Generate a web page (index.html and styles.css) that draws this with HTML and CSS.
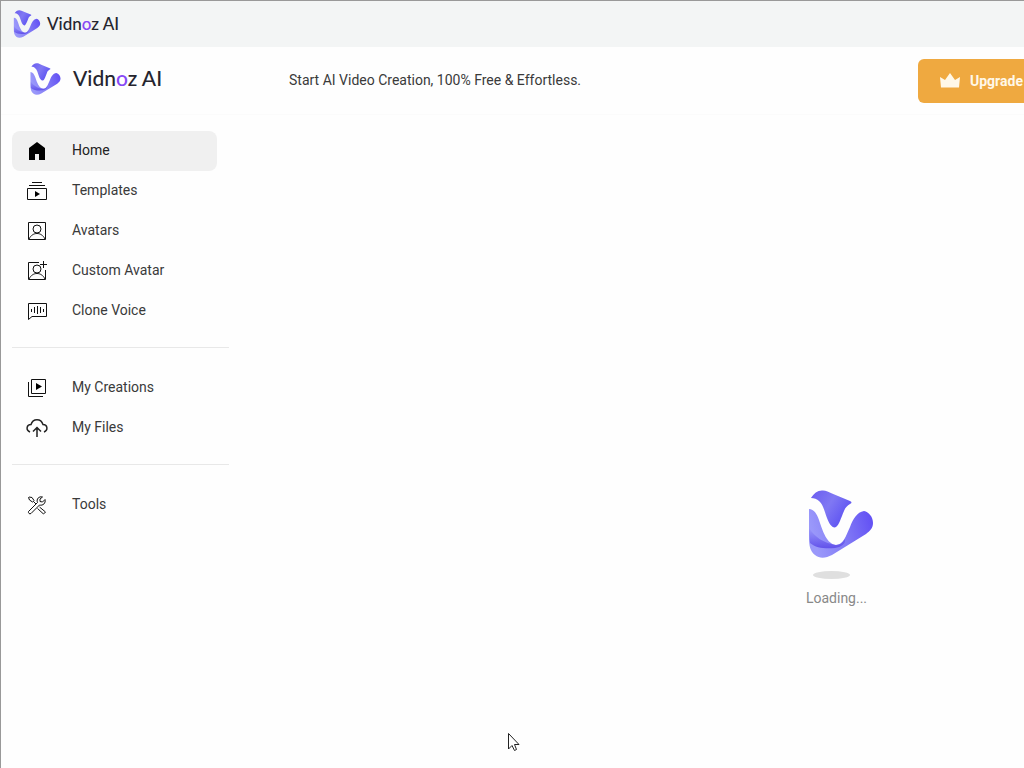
FILE: index.html
```html
<!DOCTYPE html>
<html lang="en">
<head>
    <meta charset="UTF-8">
    <meta name="viewport" content="width=device-width, initial-scale=1.0">
    <title>Vidnoz AI</title>
    <link rel="stylesheet" href="styles.css">
</head>
<body>
    <svg class="defs" aria-hidden="true">
        <defs>
            <linearGradient id="top" x1="0" y1="0" x2="1" y2="0.6">
                <stop offset="0" stop-color="#6a5df0"/>
                <stop offset="0.5" stop-color="#8078f3"/>
                <stop offset="1" stop-color="#5b50f2"/>
            </linearGradient>
            <linearGradient id="bottom" x1="0" y1="0.2" x2="1" y2="0">
                <stop offset="0" stop-color="#9a98fa"/>
                <stop offset="0.5" stop-color="#8078f5"/>
                <stop offset="1" stop-color="#5f4cf4"/>
            </linearGradient>
            <linearGradient id="fold" x1="0" y1="0" x2="0" y2="1">
                <stop offset="0" stop-color="#6658ee" stop-opacity="0"/>
                <stop offset="1" stop-color="#6252ea"/>
            </linearGradient>
        </defs>
        <symbol id="mark" viewBox="0 0 66 68">
            <path fill="url(#top)" d="M3 8C6 3 10 0 15 0.500C18 0.500 21 2 24 3.500L42 11C44 12 44 13 42 14C39 16 37 18 36 21C33 28 31 35 28 37C25 39 21 34 19 28C16 20 15 14 11 11C9 9 6 8 3 8Z"/>
            <path fill="url(#bottom)" d="M1 19C6 19 9 24 11 30C15 42 19 54 28 55C35 55 38 46 42 37C45 29 49 22 56 21C61 22 65 27 65 33C65 38 62 41 58 44L24 65C18 68 12 69 7 65C2 61 1 55 1 48Z"/>
            <path fill="url(#fold)" d="M1 38C7 47 15 53 28 55C32 55 35 52 37 49C38 54 33 57 27 58C17 59 8 58 2 53Z"/>
        </symbol>
    </svg>

    <div class="window">
        <div class="titlebar">
            <svg class="mark"><use href="#mark"/></svg>
            <span class="brand">Vidn<span class="brand-o">o</span>z AI</span>
        </div>

        <header class="header">
            <a class="logo" href="#">
                <svg class="mark"><use href="#mark"/></svg>
                <span class="brand">Vidn<span class="brand-o">o</span>z AI</span>
            </a>
            <p class="tagline">Start AI Video Creation, 100% Free &amp; Effortless.</p>
            <button class="upgrade" type="button">
                <svg width="20" height="16" viewBox="0 0 20 16" fill="#fff8e8"><path d="M1 14.500L0 4L5 7L10 0L15 7L20 4L19 14.500Z"/></svg>
                Upgrade
            </button>
        </header>

        <div class="layout">
            <nav class="sidebar">
                <ul class="menu">
                    <li><a class="item active" href="#">
                        <svg viewBox="0 0 24 24"><path fill="#000" stroke="none" d="M12 3L20 9V21H14V15H10V21H4V9Z"/></svg>
                        <span>Home</span></a></li>
                    <li><a class="item" href="#">
                        <svg viewBox="0 0 24 24"><path d="M7 3.500H17M4 6.500H20M2.500 9.500H21.500V20.500H2.500Z"/><path fill="#000" stroke="none" d="M10 12V18L15 15Z"/></svg>
                        <span>Templates</span></a></li>
                    <li><a class="item" href="#">
                        <svg viewBox="0 0 24 24"><path d="M3.500 3.500H20.500V20.500H3.500Z"/><circle cx="12" cy="10" r="4"/><path d="M4 20C6 16 9 14.500 12 14.500S18 16 20 20"/></svg>
                        <span>Avatars</span></a></li>
                    <li><a class="item" href="#">
                        <svg viewBox="0 0 24 24"><path d="M14 3.500H3.500V20.500H20.500V11M18.500 2V9M15 5.500H22"/><circle cx="12" cy="10" r="4"/><path d="M4 20C6 16 9 14.500 12 14.500S18 16 20 20"/></svg>
                        <span>Custom Avatar</span></a></li>
                    <li><a class="item" href="#">
                        <svg viewBox="0 0 24 24"><path d="M3.500 4.500H21.500V17.500H7L3.500 20.500Z"/><path d="M6.500 10V13M9.500 8V14M12.500 7V15M15.500 8V14M18.500 10V13"/></svg>
                        <span>Clone Voice</span></a></li>
                </ul>
                <ul class="menu">
                    <li><a class="item" href="#">
                        <svg viewBox="0 0 24 24"><path d="M6.500 3.500H20.500V17.500H6.500ZM3.500 6V20.500H18"/><path fill="#000" stroke="none" d="M11 7V14L17 10.500Z"/></svg>
                        <span>My Creations</span></a></li>
                    <li><a class="item" href="#">
                        <svg class="bold" viewBox="0 0 24 24"><path d="M5 16C0.500 14 1.500 8.500 6 8.500C8 2 16 2 18 8.500C22.500 8.500 23.500 14 19 16M12 21V12M8 15.500L12 11.500L16 15.500"/></svg>
                        <span>My Files</span></a></li>
                </ul>
                <ul class="menu">
                    <li><a class="item" href="#">
                        <svg viewBox="0 0 24 24"><path d="M4 4L7 4.500L9 7.500L8.500 8.500L7.500 9L4.500 7L3.500 4.500ZM8.500 8.500L11 11M14.500 14L20.500 19L18.500 21L12.500 15.500"/><path d="M17.500 4C14 3 11 6 12.500 9.500L3.500 18.500C3 20 4.500 21.500 6 20.500L14.500 12C18 13 21 10 20 6.500L17.500 9L15 8.500V6Z"/></svg>
                        <span>Tools</span></a></li>
                </ul>
            </nav>

            <main class="content">
                <div class="loader" role="status">
                    <svg class="mark"><use href="#mark"/></svg>
                    <div class="shadow"></div>
                    <p>Loading...</p>
                </div>
            </main>
        </div>
    </div>

    <svg class="cursor" width="14" height="20" viewBox="0 0 14 20" aria-hidden="true">
        <path fill="#fff" stroke="#222" d="M1.500 1.500V17L5 13.500L7.500 18.500L9.500 17.500L7.500 12.500H12Z"/>
    </svg>
</body>
</html>
```
FILE: styles.css
```css
* {
    box-sizing: border-box;
}
body {
    margin: 0;
    min-height: 100vh;
    overflow: hidden;
    font-family: Roboto, "Liberation Sans", sans-serif;
    font-size: 14px;
    color: #3a3a3a;
    background-color: #fefefe;
}
p, ul {
    margin: 0;
    padding: 0;
}
.defs {
    position: absolute;
    width: 0;
    height: 0;
}
.window {
    display: flex;
    flex-direction: column;
    min-width: 1444px;
    min-height: 100vh;
    border-top: 1px solid #999;
    border-left: 1px solid #999;
}

/* brand */
.brand {
    padding-bottom: 2px;
    font-family: Lato, sans-serif;
    font-weight: 500;
    color: #25252f;
}
.brand-o {
    color: #8748f5;
}

/* top bars */
.titlebar {
    display: flex;
    align-items: center;
    gap: 6px;
    height: 46px;
    padding-left: 12px;
    background-color: #f3f5f5;
}
.titlebar .mark {
    width: 28px;
    height: 28px;
}
.titlebar .brand {
    font-size: 17px;
}
.header {
    display: grid;
    grid-template-columns: 288px 629px auto;
    align-items: center;
    justify-content: start;
    height: 68px;
    border-bottom: 1px solid #fbfbfb;
}
.logo {
    display: flex;
    align-items: center;
    gap: 12px;
    padding: 0 0 4px 29px;
    text-decoration: none;
}
.logo .mark {
    width: 31px;
    height: 32px;
}
.logo .brand {
    font-size: 21px;
}
.tagline {
    padding-bottom: 2px;
}
.upgrade {
    display: flex;
    align-items: center;
    gap: 10px;
    height: 44px;
    padding: 0 22px;
    border: none;
    border-radius: 6px;
    font-family: inherit;
    font-size: 14px;
    font-weight: 700;
    color: #fff8e8;
    background-color: #efa940;
    cursor: pointer;
}

/* sidebar */
.layout {
    display: flex;
    flex: 1;
}
.sidebar {
    width: 228px;
    padding: 16px 0 0 11px;
}
.menu {
    list-style: none;
}
.menu + .menu {
    margin-top: 16px;
    padding-top: 20px;
    border-top: 1px solid #e8e8e8;
}
.item {
    display: flex;
    align-items: center;
    gap: 23px;
    height: 40px;
    margin-right: 12px;
    padding-left: 13px;
    border-radius: 8px;
    color: #3a3a3a;
    text-decoration: none;
}
.item span {
    padding-bottom: 2px;
}
.item svg {
    width: 24px;
    height: 24px;
    fill: none;
    stroke: #111;
    stroke-width: 1;
}
.item .bold {
    stroke: #222;
    stroke-width: 1.5;
}
.item.active {
    color: #222;
    background-color: #f0f0f0;
}

/* loader */
.content {
    flex: 1;
    display: flex;
    justify-content: center;
    align-items: center;
}
.loader {
    display: flex;
    flex-direction: column;
    align-items: center;
    padding-top: 212px;
    color: #888;
}
.loader .mark {
    width: 66px;
    height: 68px;
    margin-left: 8px;
}
.loader .shadow {
    width: 37px;
    height: 8px;
    margin: 13px 10px 11px 0;
    border-radius: 50%;
    background-color: #dfdfdf;
}

.cursor {
    position: absolute;
    left: 507px;
    top: 732px;
}
```
